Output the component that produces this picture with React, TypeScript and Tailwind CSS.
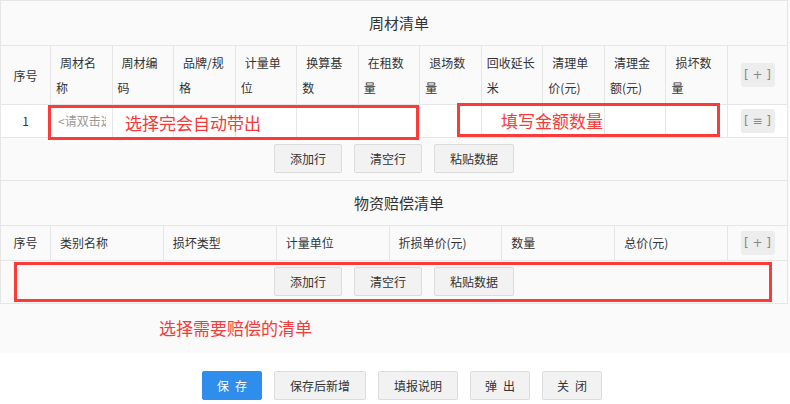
import React from "react";

const h1: { t: string; indent: boolean }[] = [
  { t: "周材名称", indent: true },
  { t: "周材编码", indent: true },
  { t: "品牌/规格", indent: true },
  { t: "计量单位", indent: true },
  { t: "换算基数", indent: true },
  { t: "在租数量", indent: true },
  { t: "退场数量", indent: true },
  { t: "回收延长米", indent: false },
  { t: "清理单价(元)", indent: true },
  { t: "清理金额(元)", indent: true },
  { t: "损坏数量", indent: true },
];

const h2 = ["类别名称", "损坏类型", "计量单位", "折损单价(元)", "数量", "总价(元)"];

function MiniBtn({ label }: { label: string }) {
  return (
    <div className="flex h-[24px] w-[34px] items-center justify-center rounded-[3px] bg-[#ededed] font-['DejaVu_Sans',sans-serif] text-[12px] leading-none text-[#888]">
      {label}
    </div>
  );
}

function Btn({ label, primary, w }: { label: string; primary?: boolean; w: string }) {
  return (
    <button
      className={
        primary
          ? `flex h-[29px] ${w} items-center justify-center whitespace-pre rounded-[2px] border border-[#2f8eec] bg-[#2f8eec] text-[12px] text-white`
          : `flex h-[29px] ${w} items-center justify-center whitespace-pre rounded-[2px] border border-[#dcdcdc] bg-[#f2f2f2] text-[12px] text-[#333]`
      }
    >
      {label}
    </button>
  );
}

function ToolRow() {
  return (
    <div className="flex h-[43px] items-center justify-center gap-[12px] border-b border-[#e6e6e6] bg-[#fafafa] pb-[1px]">
      <Btn label="添加行" w="w-[68px]" />
      <Btn label="清空行" w="w-[68px]" />
      <Btn label="粘贴数据" w="w-[80px]" />
    </div>
  );
}

export default function App() {
  return (
    <div className="relative h-[404px] w-[790px] overflow-hidden bg-white font-['Noto_Sans_CJK_SC','Noto_Sans',sans-serif] text-[#333]">
      <div className="bg-[#fafafa] pb-[49px]">
        <div className="w-[788px] border border-b-0 border-[#e6e6e6]">
          {/* title 1 */}
          <div className="flex h-[45px] items-center justify-center border-b border-[#e6e6e6] pl-[10px] text-[15px]">
            周材清单
          </div>
          {/* header 1 */}
          <div className="grid h-[59px] grid-cols-[50px_repeat(11,minmax(0,1fr))_59px] border-b border-[#e6e6e6] text-[12px] leading-[25px]">
            <div className="flex items-center justify-center border-r border-[#e6e6e6]">序号</div>
            {h1.map((h) => (
              <div key={h.t} className="flex items-center border-r border-[#e6e6e6] px-[5px]">
                <div className={h.indent ? "indent-[4px]" : ""}>{h.t}</div>
              </div>
            ))}
            <div className="flex items-center justify-center">
              <MiniBtn label="[ + ]" />
            </div>
          </div>
          {/* data row */}
          <div className="grid h-[33px] grid-cols-[50px_repeat(11,minmax(0,1fr))_59px] border-b border-[#e6e6e6] bg-white text-[12px]">
            <div className="flex items-center justify-center border-r border-[#e6e6e6]">1</div>
            <div className="flex items-center border-r border-[#e6e6e6] pl-[7px] pr-[6px]">
              <div className="w-full overflow-hidden whitespace-nowrap text-[#999]">&lt;请双击选择周材&gt;</div>
            </div>
            {Array.from({ length: 10 }).map((_, i) => (
              <div key={i} className="border-r border-[#e6e6e6]" />
            ))}
            <div className="flex items-center justify-center">
              <MiniBtn label="[ ≡ ]" />
            </div>
          </div>
          <ToolRow />
          {/* title 2 */}
          <div className="flex h-[45px] items-center justify-center border-b border-[#e6e6e6] pl-[10px] text-[15px]">
            物资赔偿清单
          </div>
          {/* header 2 */}
          <div className="grid h-[35px] grid-cols-[50px_repeat(6,minmax(0,1fr))_59px] border-b border-[#e6e6e6] text-[12px]">
            <div className="flex items-center justify-center border-r border-[#e6e6e6]">序号</div>
            {h2.map((t) => (
              <div key={t} className="flex items-center border-r border-[#e6e6e6] px-[5px]">
                <div className="indent-[4px]">{t}</div>
              </div>
            ))}
            <div className="flex items-center justify-center">
              <MiniBtn label="[ + ]" />
            </div>
          </div>
          <ToolRow />
        </div>
      </div>

      {/* footer */}
      <div className="flex justify-center gap-[12px] pl-[14px] pt-[18px]">
        <Btn label={"保\u2002存"} primary w="w-[60px]" />
        <Btn label="保存后新增" w="w-[92px]" />
        <Btn label="填报说明" w="w-[80px]" />
        <Btn label={"弹\u2002出"} w="w-[60px]" />
        <Btn label={"关\u2002闭"} w="w-[60px]" />
      </div>

      {/* annotations */}
      <div className="pointer-events-none absolute left-[48px] top-[105px] h-[35px] w-[371px] border-[3px] border-[#fb3a3a]" />
      <div className="pointer-events-none absolute left-[125px] top-[113px] text-[17px] leading-[20px] text-[#f53a3a]">
        选择完会自动带出
      </div>
      <div className="pointer-events-none absolute left-[457px] top-[103px] h-[34px] w-[263px] border-[3px] border-[#fb3a3a]" />
      <div className="pointer-events-none absolute left-[501px] top-[111px] text-[17px] leading-[20px] text-[#f53a3a]">
        填写金额数量
      </div>
      <div className="pointer-events-none absolute left-[14px] top-[262px] h-[40px] w-[758px] border-[3px] border-[#fb3a3a]" />
      <div className="pointer-events-none absolute left-[159px] top-[318px] text-[17px] leading-[20px] text-[#f53a3a]">
        选择需要赔偿的清单
      </div>
    </div>
  );
}
